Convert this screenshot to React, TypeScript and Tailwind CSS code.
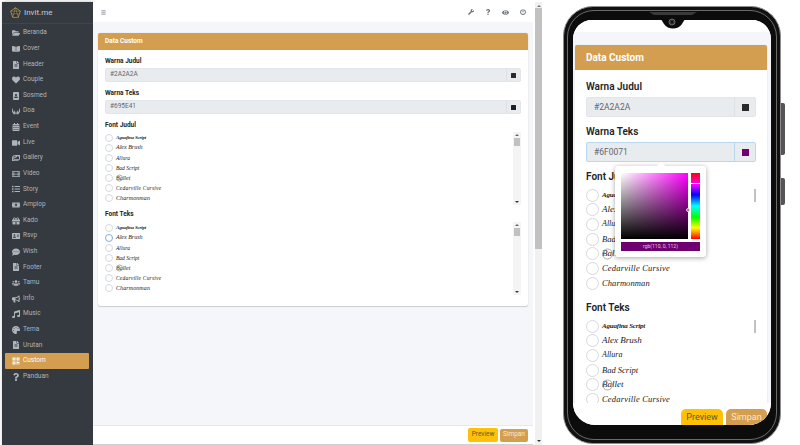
import type { IconType } from 'react-icons';
import {
  FaAddressCard,
  FaBars,
  FaBookOpen,
  FaBullhorn,
  FaCalendarAlt,
  FaCommentDots,
  FaEye,
  FaFileAlt,
  FaFilm,
  FaFolderOpen,
  FaGift,
  FaHands,
  FaHeart,
  FaImages,
  FaList,
  FaMoneyBillAlt,
  FaMusic,
  FaPalette,
  FaPortrait,
  FaPowerOff,
  FaQrcode,
  FaQuestion,
  FaUsers,
  FaVideo,
  FaWrench,
} from 'react-icons/fa';

interface MenuItem {
  label: string;
  icon: IconType;
  active?: boolean;
}

const menu: MenuItem[] = [
  { label: 'Beranda', icon: FaFolderOpen },
  { label: 'Cover', icon: FaBookOpen },
  { label: 'Header', icon: FaFileAlt },
  { label: 'Couple', icon: FaHeart },
  { label: 'Sosmed', icon: FaPortrait },
  { label: 'Doa', icon: FaHands },
  { label: 'Event', icon: FaCalendarAlt },
  { label: 'Live', icon: FaVideo },
  { label: 'Gallery', icon: FaImages },
  { label: 'Video', icon: FaFilm },
  { label: 'Story', icon: FaList },
  { label: 'Amplop', icon: FaMoneyBillAlt },
  { label: 'Kado', icon: FaGift },
  { label: 'Rsvp', icon: FaAddressCard },
  { label: 'Wish', icon: FaCommentDots },
  { label: 'Footer', icon: FaFileAlt },
  { label: 'Tamu', icon: FaUsers },
  { label: 'Info', icon: FaBullhorn },
  { label: 'Music', icon: FaMusic },
  { label: 'Tema', icon: FaPalette },
  { label: 'Urutan', icon: FaFileAlt },
  { label: 'Custom', icon: FaQrcode, active: true },
  { label: 'Panduan', icon: FaQuestion },
];

const fonts = [
  { name: 'Aguafina Script', small: 'text-[5px] font-bold tracking-[-0.2px]', big: 'text-[7px] font-bold tracking-[-0.2px]' },
  { name: 'Alex Brush', small: 'text-[6px]', big: 'text-[9px]' },
  { name: 'Allura', small: 'text-[5.5px]', big: 'text-[8px]' },
  { name: 'Bad Script', small: 'text-[5.5px]', big: 'text-[8.5px]' },
  { name: 'Ballet', small: 'text-[6px]', big: 'text-[9px]' },
  { name: 'Cedarville Cursive', small: 'text-[5.5px] tracking-[0.2px]', big: 'text-[8.5px] tracking-[0.2px]' },
  { name: 'Charmonman', small: 'text-[6px] tracking-[0.1px]', big: 'text-[8.5px] tracking-[0.1px]' },
];

const FontList = ({ big, focus, count = 7 }: { big?: boolean; focus?: number; count?: number }) => (
  <div className={big ? 'flex flex-col gap-[1.7px]' : 'flex flex-col pt-[0.5px]'}>
    {fonts.slice(0, count).map((f, i) => (
      <div key={f.name} className={big ? 'flex h-[13px] items-center gap-[3px]' : 'flex h-[10.15px] items-center gap-[3px]'}>
        <span
          className={`shrink-0 rounded-full bg-white ${big ? 'size-[13px] border' : 'size-[8px] border-[0.7px]'} ${
            focus === i ? 'border-[#80aee0]' : 'border-[#d5d8dc]'
          }`}
        />
        <span className={`relative font-['Liberation_Serif',serif] whitespace-nowrap text-[#222] italic ${big ? f.big : f.small}`}>
          {f.name === 'Ballet' && (
            <span className={`absolute top-1/2 left-0 -translate-y-1/2 rounded-full border border-[#aaa] ${big ? 'size-[11px]' : 'size-[7px]'}`} />
          )}
          {f.name}
        </span>
      </div>
    ))}
  </div>
);

const MiniScroll = () => (
  <div className="flex h-full w-[8px] flex-col items-center bg-[#f4f4f4]">
    <span className="mt-[2px] h-0 w-0 border-x-[2px] border-b-[2px] border-x-transparent border-b-[#666]" />
    <span className="mt-[2px] h-[8px] w-[6px] bg-[#c1c1c1]" />
    <span className="mt-auto mb-[2px] h-0 w-0 border-x-[2px] border-t-[2px] border-x-transparent border-t-[#333]" />
  </div>
);

const ColorRow = ({ value, swatch }: { value: string; swatch: string }) => (
  <div className="mt-[3px] flex h-[14px] rounded-[2px] border border-[#e2e6ea] bg-[#e9ecef]">
    <span className="flex flex-1 items-center pl-[4px] text-[6.5px] text-[#5c6670]">{value}</span>
    <span className="flex w-[14px] items-center justify-center border-l border-[#dde1e5]">
      <span className="size-[5px] rounded-[0.5px]" style={{ backgroundColor: swatch }} />
    </span>
  </div>
);

const Sidebar = () => (
  <aside className="flex w-[91px] shrink-0 flex-col bg-[#343a40] text-[#aeb4bb] shadow-[1px_0_4px_rgba(0,0,0,0.3)]">
    <div className="flex h-[22px] items-center gap-[3px] border-b border-[#3f454b] pl-[8px]">
      <svg viewBox="0 0 16 16" className="size-[11px]" fill="none" stroke="#b99a5b" strokeWidth="1.2">
        <path d="M8 1 15 6 12 15H4L1 6Z" fill="#2b2b2b" />
        <path d="M1 6 15 6M4 15 8 1 12 15M3 10H13" strokeWidth="0.8" />
      </svg>
      <span className="text-[8px] text-[#c8ccd0]">Invit.me</span>
    </div>
    <nav className="flex flex-col pt-[1.5px] pr-[4px] pl-[3px]">
      {menu.map((m) => (
        <div
          key={m.label}
          className={`flex h-[15.62px] shrink-0 items-center gap-[3px] rounded-[1px] pl-[7px] text-[6.5px] ${
            m.active ? 'bg-[#d39e50] text-white' : ''
          }`}
        >
          <m.icon className="size-[8px] shrink-0" />
          <span>{m.label}</span>
        </div>
      ))}
    </nav>
  </aside>
);

const Editor = () => (
  <main className="flex w-[440px] shrink-0 flex-col">
    <header className="flex h-[20px] items-center justify-between bg-white pr-[7px] pl-[8px] text-[#6c757d]">
      <FaBars className="size-[5px]" />
      <div className="flex items-center gap-[11px]">
        <FaWrench className="size-[6px]" />
        <FaQuestion className="size-[6px]" />
        <FaEye className="size-[7px]" />
        <FaPowerOff className="size-[6px]" />
      </div>
    </header>
    <div className="min-h-0 flex-1 bg-[#f4f6f9] px-[5px] pt-[11px]">
      <section className="h-[273px] rounded-[2px] bg-white shadow-[0_0_1px_rgba(0,0,0,0.25),0_1px_1px_rgba(0,0,0,0.15)]">
        <h2 className="flex h-[17px] items-center rounded-t-[2px] bg-[#d39e50] pl-[7px] text-[6.5px] font-bold text-white">Data Custom</h2>
        <div className="px-[7px] pt-[7px]">
          <label className="block text-[6.5px] leading-[8px] font-bold text-[#212529]">Warna Judul</label>
          <ColorRow value="#2A2A2A" swatch="#2A2A2A" />
          <label className="mt-[7px] block text-[6.5px] leading-[8px] font-bold text-[#212529]">Warna Teks</label>
          <ColorRow value="#695E41" swatch="#1d1f24" />
          <label className="mt-[7px] block text-[6.5px] leading-[8px] font-bold text-[#212529]">Font Judul</label>
          <div className="mt-[3px] flex h-[73px] justify-between">
            <FontList />
            <MiniScroll />
          </div>
          <label className="mt-[5px] block text-[6.5px] leading-[8px] font-bold text-[#212529]">Font Teks</label>
          <div className="mt-[4px] flex h-[73px] justify-between">
            <FontList focus={1} />
            <MiniScroll />
          </div>
        </div>
      </section>
    </div>
    <footer className="flex h-[19px] items-center justify-end gap-[2px] border-t border-[#e6e8eb] bg-white pr-[5px]">
      <button className="h-[14px] w-[30px] rounded-[2px] bg-[#ffc107] text-[6.5px] text-[#5c5a3a]">Preview</button>
      <button className="h-[13px] w-[28px] rounded-[2px] bg-[#d39e50] text-[6.5px] text-[#f7e9d3]">Simpan</button>
    </footer>
    <div className="h-[1px] shrink-0 bg-[#cfd2d5]" />
  </main>
);

const PageScroll = () => (
  <div className="flex w-[7px] shrink-0 flex-col items-center bg-[#f1f1f1]">
    <span className="mt-[3px] h-0 w-0 border-x-[2px] border-b-[2px] border-x-transparent border-b-[#777]" />
    <span className="mt-[1px] h-[241px] w-full bg-[#c1c1c1]" />
    <span className="mt-auto mb-[3px] h-0 w-0 border-x-[2px] border-t-[2px] border-x-transparent border-t-[#333]" />
  </div>
);

const ColorPicker = () => (
  <div className="absolute top-[134px] left-[42px] z-10 w-[91px] rounded-[3px] bg-white px-[6px] pt-[7px] pb-[6px] shadow-[0_1px_5px_rgba(0,0,0,0.35)]">
    <span className="absolute -top-[3px] left-[43px] size-[6px] rotate-45 bg-white" />
    <div className="flex gap-[3px]">
      <div className="relative h-[66px] w-[67px] bg-[linear-gradient(to_top,#000,transparent),linear-gradient(to_right,#fff,#f0f)]">
        <span className="absolute top-[35px] -right-[2px] size-[4px] rounded-full border border-[#ddd] bg-[#8a5a8a]" />
      </div>
      <div className="relative h-[66px] w-[9px] bg-[linear-gradient(to_bottom,#f00_0%,#f0f_17%,#00f_33%,#0ff_50%,#0f0_67%,#ff0_83%,#f00_100%)]">
        <span className="absolute top-[10px] -right-[1px] -left-[1px] h-[1px] bg-white" />
      </div>
    </div>
    <div className="mt-[3px] flex h-[9px] w-[79px] items-center justify-center bg-[#6e0070] text-[5px] text-[#e4c4e4]">rgb(110, 0, 112)</div>
  </div>
);

const Phone = () => (
  <div className="relative mt-[6px] ml-[21px] h-[438px] w-[218px] shrink-0">
    <span className="absolute top-[97px] -right-[4px] h-[52px] w-[5px] rounded-r-[2px] bg-[#555]" />
    <span className="absolute top-[172px] -right-[4px] h-[27px] w-[5px] rounded-r-[2px] bg-[#555]" />
    <div className="relative h-full rounded-[30px] border border-[#8d8d8d] bg-[#111] p-[3px]">
      <div className="h-full rounded-[27px] border border-[#6b6b6b] bg-[#0c0c0c] px-[5px] pt-[9px] pb-[14px]">
        <div className="relative flex h-full flex-col overflow-hidden rounded-t-[19px] rounded-b-[22px] bg-white">
          <div className="h-[12px] shrink-0 bg-white" />
          <div className="relative min-h-0 flex-1 overflow-hidden bg-[#f4f6f9] pt-[13px] pr-[4px] pl-[2px]">
            <section className="h-[400px] rounded-[2px] bg-white shadow-[0_0_1px_rgba(0,0,0,0.25)]">
              <h2 className="flex h-[25px] items-center rounded-t-[2px] bg-[#d39e50] pl-[11px] text-[10px] font-bold text-white">Data Custom</h2>
              <div className="px-[11px] pt-[10px]">
                <label className="block text-[10px] leading-[14px] font-semibold text-[#212529]">Warna Judul</label>
                <div className="mt-[3px] flex h-[20px] rounded-[2px] border border-[#e2e6ea] bg-[#e9ecef]">
                  <span className="flex flex-1 items-center pl-[7px] text-[8.5px] text-[#5c6670]">#2A2A2A</span>
                  <span className="flex w-[21px] items-center justify-center border-l border-[#dde1e5]">
                    <span className="size-[7px] bg-[#2a2a2a]" />
                  </span>
                </div>
                <label className="mt-[8px] block text-[10px] leading-[14px] font-semibold text-[#212529]">Warna Teks</label>
                <div className="mt-[3px] flex h-[20px] rounded-[2px] border border-[#b9d7ee] bg-[#e9ecef]">
                  <span className="flex flex-1 items-center pl-[7px] text-[8.5px] text-[#5c6670]">#6F0071</span>
                  <span className="flex w-[21px] items-center justify-center border-l border-[#b9d7ee]">
                    <span className="size-[7px] bg-[#6e0070]" />
                  </span>
                </div>
                <label className="mt-[8px] block text-[10px] leading-[14px] font-semibold text-[#212529]">Font Judul</label>
                <div className="relative mt-[4.5px] h-[99px]">
                  <FontList big />
                  <span className="absolute top-0 right-0 h-[13px] w-[2px] bg-[#c1c1c1]" />
                </div>
                <label className="mt-[13.5px] block text-[10px] leading-[14px] font-semibold text-[#212529]">Font Teks</label>
                <div className="relative mt-[4.5px] h-[99px]">
                  <FontList big count={6} />
                  <span className="absolute top-0 right-0 h-[13px] w-[2px] bg-[#c1c1c1]" />
                </div>
              </div>
            </section>
            <ColorPicker />
          </div>
          <div className="flex h-[22px] shrink-0 items-start justify-end gap-[3px] bg-white pt-[6px] pr-[4px]">
            <button className="h-[20px] w-[42px] shrink-0 rounded-[5px] bg-[#ffc107] pb-[3px] text-[9px] text-[#5c5a3a]">Preview</button>
            <button className="h-[20px] w-[41px] shrink-0 rounded-[5px] bg-[#d39e50] pb-[3px] text-[9px] text-[#f7e9d3]">Simpan</button>
          </div>
        </div>
      </div>
      <svg viewBox="0 0 50 20" className="absolute top-[5px] left-[84px] h-[20px] w-[50px]">
        <path d="M0 0H50L44 4C38 5 37 7 34 12 30 18 20 18 16 12 13 7 12 5 6 4Z" fill="#0c0c0c" />
        <path d="M1 0H49L44 3H6Z" fill="#3a3a3a" />
        <circle cx="24" cy="10" r="3" fill="#333" stroke="#777" strokeWidth="0.8" />
        <circle cx="24" cy="10" r="1.2" fill="#111" />
      </svg>
    </div>
  </div>
);

export default function App() {
  return (
    <div className="flex h-[445px] w-[800px] overflow-hidden bg-white font-['Roboto',sans-serif]">
      <div className="flex h-[445px] shrink-0 pt-[2px] pl-[2px]">
        <Sidebar />
        <Editor />
        <div className="ml-[2px] flex">
          <PageScroll />
        </div>
      </div>
      <Phone />
    </div>
  );
}
